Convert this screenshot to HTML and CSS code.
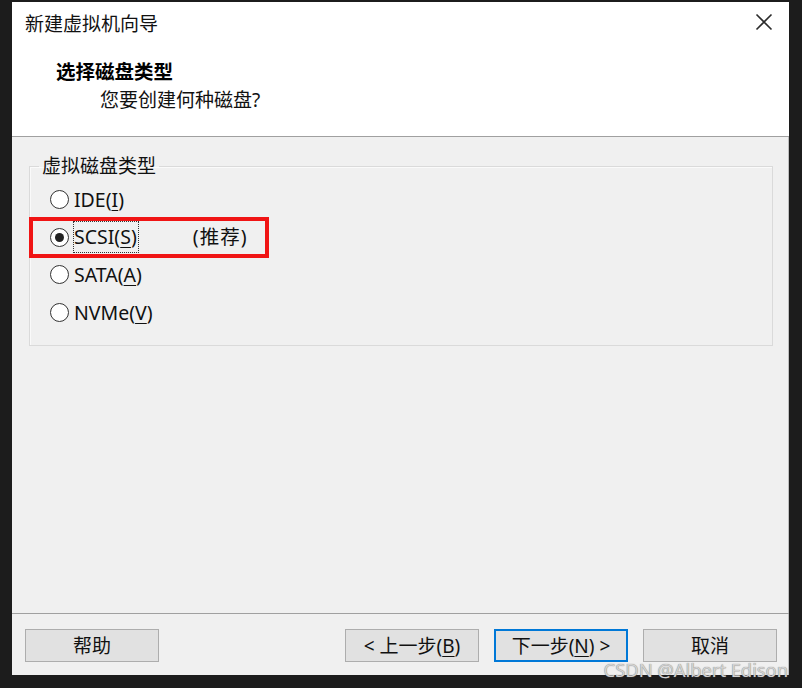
FILE: index.html
```html
<!DOCTYPE html>
<html lang="zh-CN">
<head>
<meta charset="utf-8">
<title>新建虚拟机向导</title>
<link rel="stylesheet" href="styles.css">
</head>
<body>
<div class="dialog">
  <div class="header">
    <div class="titlebar">
      <span class="title">新建虚拟机向导</span>
      <svg class="close" width="18" height="18" viewBox="0 0 18 18"><path d="M1.5 1.5 L16.5 16.5 M16.5 1.5 L1.5 16.5" stroke="#2b2b2b" stroke-width="1.6" fill="none"/></svg>
    </div>
    <div class="heading">选择磁盘类型</div>
    <div class="subheading">您要创建何种磁盘?</div>
  </div>
  <div class="body">
    <fieldset class="group">
      <legend class="legend">虚拟磁盘类型</legend>
      <div class="row"><span class="radio"></span><span class="label">IDE(<u>I</u>)</span></div>
      <div class="row"><span class="radio checked"></span><span class="label focus">SCSI(<u>S</u>)</span><span class="note">(推荐)</span><span class="mark"></span></div>
      <div class="row"><span class="radio"></span><span class="label">SATA(<u>A</u>)</span></div>
      <div class="row"><span class="radio"></span><span class="label">NVMe(<u>V</u>)</span></div>
    </fieldset>
  </div>
  <div class="footer">
    <button class="btn">帮助</button>
    <div class="spacer"></div>
    <button class="btn">&lt; 上一步(<u>B</u>)</button>
    <button class="btn primary">下一步(<u>N</u>) &gt;</button>
    <button class="btn">取消</button>
  </div>
</div>
<div class="watermark">CSDN @Albert Edison</div>
</body>
</html>
```
FILE: styles.css
```css
html, body {
  margin: 0;
  padding: 0;
  background: #1c1c1c;
  width: 802px;
  height: 688px;
  overflow: hidden;
  font-family: "Noto Sans", "Noto Sans CJK SC", sans-serif;
  color: #000;
}
body { position: relative; }

.dialog {
  margin: 2px 0 0 12px;
  width: 777px;
  height: 673px;
  display: flex;
  flex-direction: column;
  background: #f0f0f0;
  box-shadow: inset -1px 0 0 #bdbdbd;
}

.header {
  height: 134px;
  background: #fff;
  border-bottom: 1px solid #a0a0a0;
  box-sizing: content-box;
}
.titlebar {
  display: flex;
  align-items: center;
  justify-content: space-between;
  height: 24px;
  padding: 10px 16px 0 13px;
}
.title {
  font-size: 19px;
  line-height: 24px;
  color: #111;
}
.close { margin-top: -4px; }

.heading {
  margin: 22px 0 0 44px;
  font-size: 19.5px;
  line-height: 28px;
  font-weight: bold;
}
.subheading {
  margin-left: 88px;
  font-size: 19px;
  line-height: 28px;
  color: #111;
}

.body {
  flex: 1;
  padding: 17px 16px 0 17px;
  border-bottom: 1px solid #a0a0a0;
}

.group {
  margin: 0;
  padding: 3px 0 0 0;
  height: 192px;
  box-sizing: border-box;
  border: 1px solid #dadada;
  box-shadow: inset 1px 1px 0 #fafafa;
}
.legend {
  margin-left: 9px;
  padding: 0 3px;
  font-size: 19px;
  line-height: 24px;
  color: #111;
}

.row {
  display: flex;
  align-items: center;
  height: 37.6px;
  padding-left: 20px;
  font-size: 19.5px;
  position: relative;
}
.radio {
  width: 19px;
  height: 19px;
  box-sizing: border-box;
  border: 1.6px solid #333;
  border-radius: 50%;
  background: #fff;
  display: flex;
  align-items: center;
  justify-content: center;
  flex: none;
}
.radio.checked::after {
  content: "";
  width: 9px;
  height: 9px;
  border-radius: 50%;
  background: #222;
}
.label {
  margin-left: 5px;
  line-height: 24px;
  color: #111;
}
.label u { text-underline-offset: 3px; }
.focus {
  outline: 1px dotted #333;
  outline-offset: 0;
  padding: 3px 1px 3px 0;
  margin-left: 5px;
}
.note {
  margin-left: 55px;
  line-height: 24px;
  color: #111;
  font-size: 19.5px;
  letter-spacing: 1px;
}
.mark {
  position: absolute;
  left: -1px;
  top: -2px;
  width: 240px;
  height: 41px;
  box-sizing: border-box;
  border: 4px solid #f01414;
}

.footer {
  height: 61px;
  display: flex;
  align-items: flex-start;
  padding: 15px 12px 0 13px;
  box-sizing: border-box;
  gap: 15px;
}
.spacer { flex: 1; }
.btn {
  width: 134px;
  height: 33px;
  background: #e1e1e1;
  border: 1px solid #adadad;
  font-family: "Noto Sans", "Noto Sans CJK SC", sans-serif;
  font-size: 19px;
  line-height: 24px;
  color: #111;
  padding: 0;
}
.btn u { text-underline-offset: 3px; }
.btn.primary {
  border: 2px solid #0078d7;
}

.watermark {
  position: absolute;
  right: 14px;
  top: 663px;
  font-family: "Noto Sans", sans-serif;
  font-size: 18.5px;
  line-height: 14px;
  color: #d2d2d2;
  text-shadow: 0 0 1px #6a6a6a;
  letter-spacing: -0.1px;
}
```
